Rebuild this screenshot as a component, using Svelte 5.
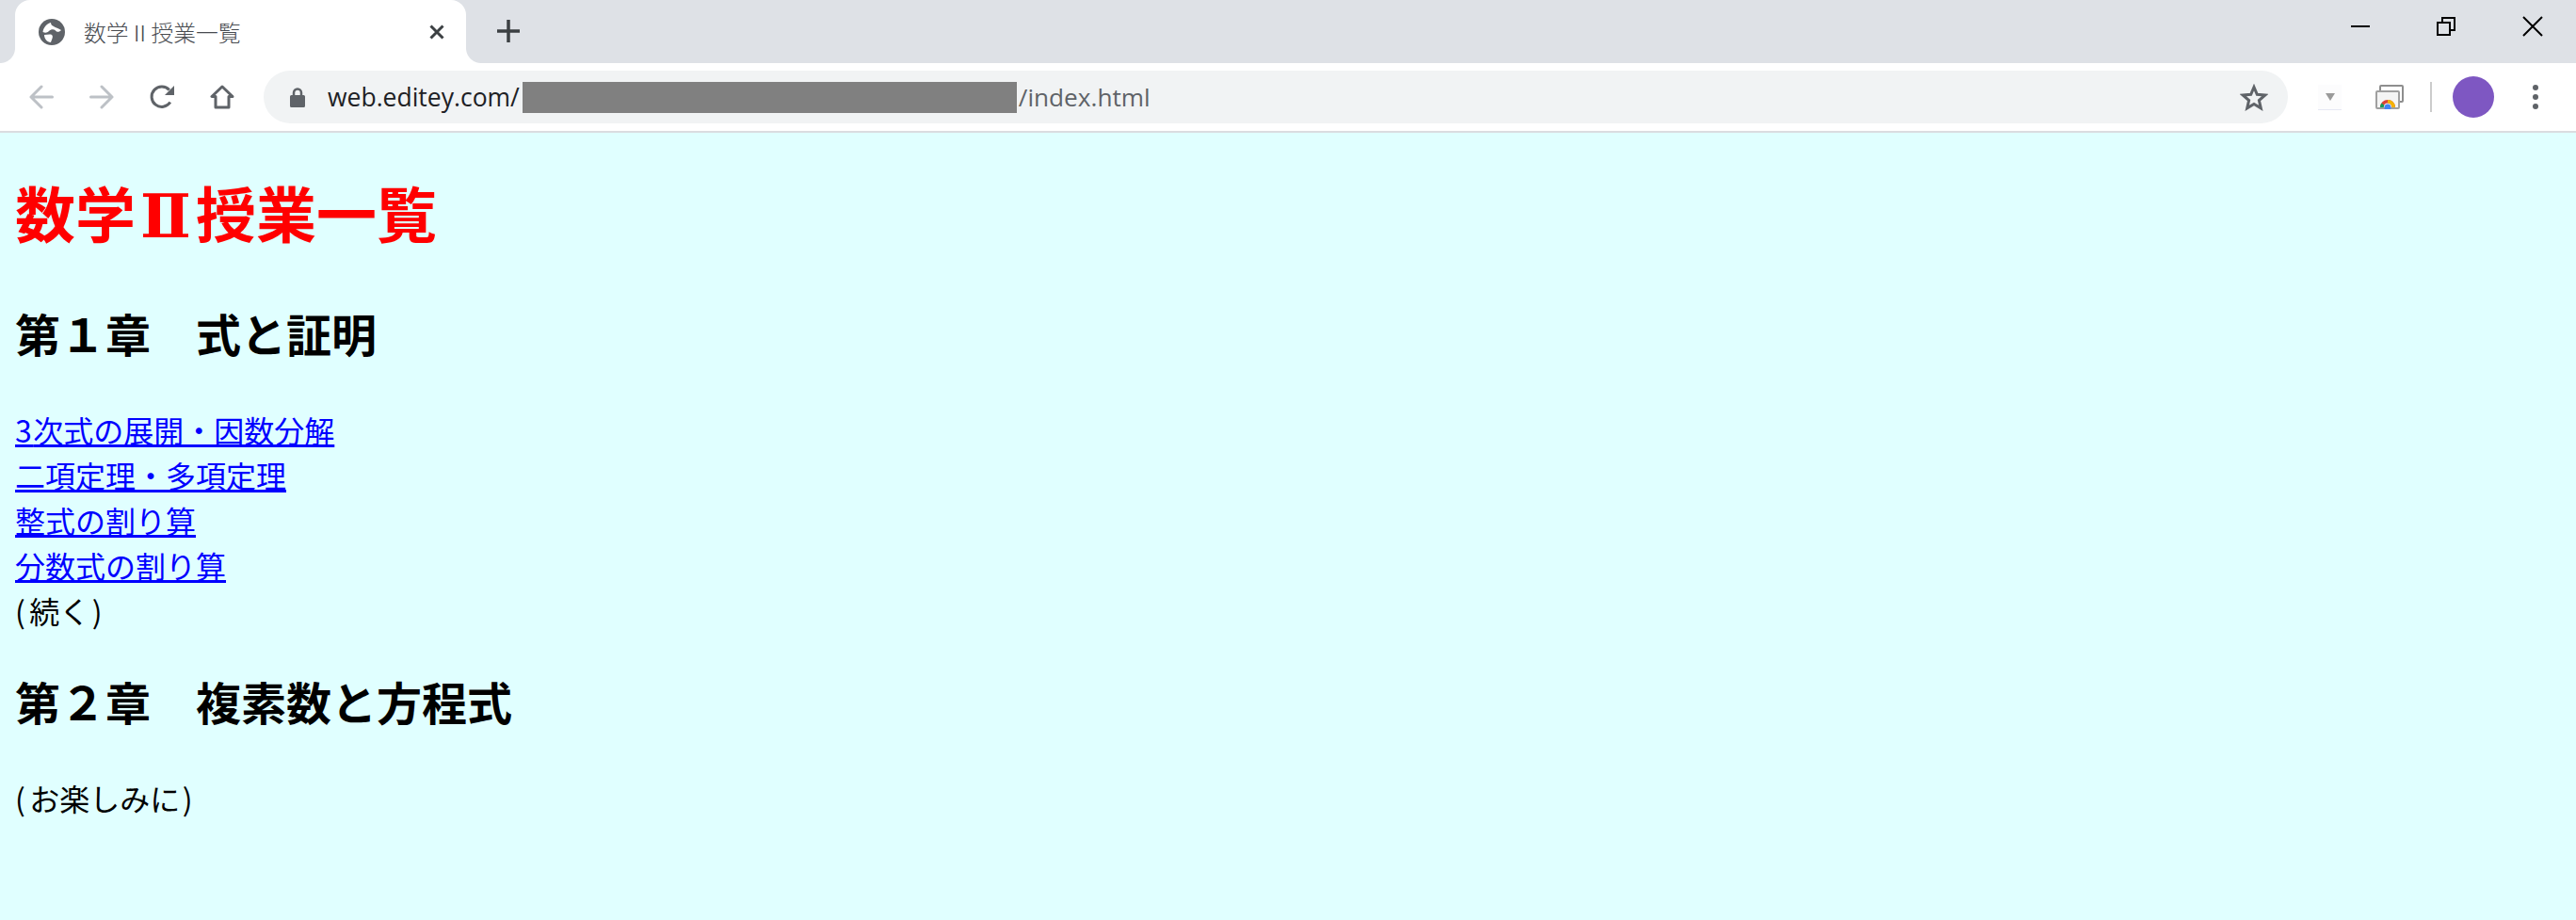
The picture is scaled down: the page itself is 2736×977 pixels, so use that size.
<script>
  const links = ['二項定理・多項定理', '整式の割り算', '分数式の割り算'];
</script>

<div class="page">
  <header class="chrome">
    <div class="strip">
      <div class="tab">
        <svg class="globe" viewBox="0 0 28 28"><circle cx="14" cy="14" r="14" fill="#5f6368"/><path fill="#fff" d="M4.500 14C5 9 9 5 13 4c0 2 1 3 3 4 2 1.500 5 2 8 4-2 2.500-5 2-6 .5-2-2-5-1.500-7 .5-2 2-4 2-6.500 1zM6 17c3 0 6-1 8 0 2 1.500 0 5-1 8-4 0-7-4-7-8z"/></svg>
        <span class="title">数学Ⅱ授業一覧</span>
        <svg class="tabclose" viewBox="0 0 16 16"><path d="M1.500 1.500l13 13M14.500 1.500l-13 13"/></svg>
      </div>
      <svg class="newtab" viewBox="0 0 24 24"><path d="M12 0v24M0 12h24"/></svg>
      <div class="winctl">
        <svg viewBox="0 0 20 20"><path d="M0 10h20"/></svg>
        <svg viewBox="0 0 20 20"><path d="M1 6h13v13H1zM6 6V1h13v13h-5"/></svg>
        <svg class="winclose" viewBox="0 0 20 20"><path d="M0 0l20 20M20 0L0 20"/></svg>
      </div>
    </div>
    <div class="toolbar">
      <svg class="ic dim first" viewBox="0 0 26 26"><path d="M24.500 13H2M13 2L2 13l11 11"/></svg>
      <svg class="ic dim" viewBox="0 0 26 26"><path d="M1.500 13H24M13 2l11 11-11 11"/></svg>
      <svg class="ic dark" viewBox="0 0 26 26"><path d="M21.800 18.500A10.700 10.700 0 1 1 20.800 5.600"/><path class="fill" d="M26 1v10h-10z"/></svg>
      <svg class="ic dark" viewBox="0 0 26 26"><path stroke-linejoin="round" d="M13 2L2 12.500h4v11.500h14V12.500h4z"/></svg>
      <div class="omni">
        <svg class="lock" viewBox="0 0 16 21"><path class="body" d="M1.500 8h13a1.500 1.500 0 0 1 1.500 1.500v10a1.500 1.500 0 0 1-1.500 1.500h-13a1.500 1.500 0 0 1-1.500-1.500v-10a1.500 1.500 0 0 1 1.500-1.500z"/><path class="shackle" d="M4 8V5.500a4 4 0 0 1 8 0V8"/></svg>
        <span class="url"><span class="host">web.editey.com/</span><span class="mask"></span><span class="path">/index.html</span></span>
        <svg class="star" viewBox="0 0 30 29"><path d="M15 3.500l3.300 7.800 8.500.7-6.400 5.600 1.900 8.300-7.300-4.400-7.300 4.400 1.900-8.300-6.400-5.600 8.500-.7z"/></svg>
      </div>
      <div class="ext">
        <svg class="tri" viewBox="0 0 10 10"><path d="M0 1h10L5 9z"/></svg>
      </div>
      <svg class="cast" viewBox="0 0 30 26">
        <rect class="back" x="5" y="1" width="24" height="17" rx="1"/>
        <rect class="front" x="1" y="7" width="24" height="18" rx="1"/>
        <path fill="#db4437" d="M5 24a8 8 0 0 1 16 0h-3.500a4.500 4.500 0 0 0-9 0z" />
        <path fill="#f4b400" d="M13 16a8 8 0 0 1 8 8h-3.500a4.500 4.500 0 0 0-4.500-4.500z"/>
        <path fill="#0f9d58" d="M5 24a8 8 0 0 1 1.500-4.500l3 2.500a4 4 0 0 0-1 2z"/>
        <circle fill="#4285f4" cx="13" cy="24" r="3.500"/>
      </svg>
      <span class="divider"></span>
      <span class="avatar"></span>
      <div class="dots"><i></i><i></i><i></i></div>
    </div>
  </header>

  <main>
    <h1>数学<span class="numeral">Ⅱ</span>授業一覧</h1>
    <h2>第１章　式と証明</h2>
    <p>
      <a href="#top"><span class="digit">3</span>次式の展開・因数分解</a><br />
      {#each links as l}
        <a href="#top">{l}</a><br />
      {/each}
      <span class="open">(</span>続く<span class="shut">)</span>
    </p>
    <h2>第２章　複素数と方程式</h2>
    <p><span class="open">(</span>お楽しみに<span class="shut">)</span></p>
  </main>
</div>

<style>
  :global(body) { margin: 0; background: #e0ffff; }
  .page { font-family: "Noto Sans CJK JP", "Noto Sans", sans-serif; min-height: 977px; background: #e0ffff; }

  .chrome { background: #fff; }
  .strip { height: 67px; background: #dee1e6; display: flex; align-items: flex-start; padding-left: 16px; }
  .tab { position: relative; width: 479px; height: 67px; background: #fff; border-radius: 16px 16px 0 0; display: flex; align-items: center; padding-left: 25px; box-sizing: border-box; }
  .tab::before, .tab::after { content: ""; position: absolute; bottom: 0; width: 16px; height: 16px; }
  .tab::before { left: -16px; background: radial-gradient(circle at 0 0, transparent 15.500px, #fff 16.500px); }
  .tab::after { right: -16px; background: radial-gradient(circle at 100% 0, transparent 15.500px, #fff 16.500px); }
  .globe { width: 28px; height: 28px; flex: none; }
  .title { margin-left: 20px; font-size: 23.800px; color: #484b50; font-weight: 300; line-height: 1; width: 340px; }
  .tabclose { width: 16px; height: 16px; fill: none; stroke: #3c4043; stroke-width: 3; flex: none; margin-left: 27px; }
  .newtab { width: 24px; height: 24px; fill: none; stroke: #3c4043; stroke-width: 3.500; margin: 21px 0 0 33px; flex: none; }
  .winctl { margin-left: auto; margin-top: 18px; display: flex; gap: 71px; padding-right: 36px; }
  .winctl svg { width: 20px; height: 20px; fill: none; stroke: #000; stroke-width: 2; display: block; overflow: visible; }
  .winctl .winclose { margin-left: 1px; }

  .toolbar { height: 72px; display: flex; align-items: center; border-bottom: 2px solid #dadce0; background: #fff; }
  .ic { width: 26px; height: 26px; flex: none; fill: none; stroke-width: 3; margin-left: 38px; }
  .ic.first { margin-left: 31px; }
  .dim { stroke: #bdc1c6; stroke-linecap: round; stroke-linejoin: round; }
  .dark { stroke: #5f6368; }
  .dark .fill { fill: #5f6368; stroke: none; }

  .omni { margin-left: 31px; width: 2150px; height: 56px; border-radius: 28px; background: #f1f3f4; display: flex; align-items: center; padding-left: 28px; box-sizing: border-box; flex: none; }
  .lock { width: 16px; height: 21px; flex: none; }
  .lock .body { fill: #5f6368; }
  .lock .shackle { fill: none; stroke: #5f6368; stroke-width: 2.500; }
  .url { margin-left: 24px; font-family: "Open Sans", "Noto Sans", sans-serif; font-size: 26.500px; display: flex; align-items: center; line-height: 33px; width: 1990px; }
  .host { color: #202124; }
  .path { color: #5f6368; font-size: 26.200px; }
  .mask { width: 525px; height: 33px; background: #808080; margin: 0 2px 0 3px; }
  .star { width: 30px; height: 29px; fill: none; stroke: #5f6368; stroke-width: 3; flex: none; margin-left: 41px; }

  .ext { margin-left: 32px; width: 25px; height: 27px; background: #fcfcfd; border-bottom: 1px solid #e6e8f4; box-sizing: border-box; display: flex; align-items: center; justify-content: center; flex: none; }
  .tri { width: 10px; height: 10px; fill: #9a9a9a; }
  .cast { width: 30px; height: 26px; margin-left: 36px; flex: none; }
  .back { fill: #fff; stroke: #8e8e8e; stroke-width: 2; }
  .front { fill: #f4f4f4; stroke: #a0a0a0; stroke-width: 2; }
  .divider { width: 2px; height: 32px; background: #ccc; margin-left: 28px; flex: none; }
  .avatar { width: 44px; height: 44px; border-radius: 50%; background: #7e57c2; margin-left: 22px; flex: none; }
  .dots { display: flex; flex-direction: column; gap: 4px; margin-left: 41px; flex: none; }
  .dots i { display: block; width: 6px; height: 6px; border-radius: 50%; background: #5f6368; }

  main { padding: 0 16px; display: flow-root; color: #000; }
  h1 { font-size: 64px; line-height: 86px; margin: 40px 0 50px; color: #ff0000; font-weight: 700; }
  h2 { font-size: 48px; line-height: 72px; margin: 36.500px 0 42.500px; font-weight: 700; }
  h1 + h2 { margin-top: 48.500px; }
  p { font-size: 32px; line-height: 48px; margin: 0; }
  a { color: #0000ff; text-decoration: underline; }
  .numeral { font-family: "DejaVu Serif", serif; display: inline-block; width: 64px; text-align: center; line-height: 1; }
  .open { padding-right: 4.500px; }
  .shut { padding-left: 2.500px; }
  .digit { letter-spacing: 1.500px; }
</style>
